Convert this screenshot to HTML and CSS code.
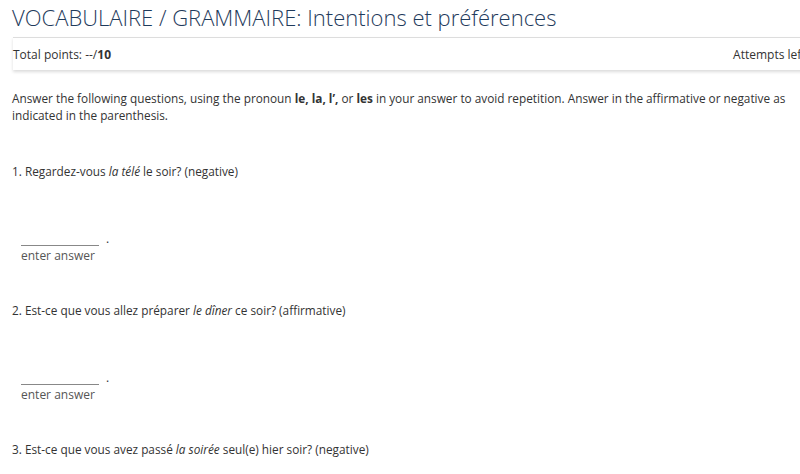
FILE: index.html
```html
<!DOCTYPE html>
<html>
<head>
<meta charset="utf-8">
<link rel="stylesheet" href="styles.css">
</head>
<body>
<div class="page">
  <h1 class="title">VOCABULAIRE / GRAMMAIRE: Intentions et préférences</h1>
  <div class="bar">
    <span class="points">Total points: --/<b>10</b></span>
    <span class="attempts">Attempts left: 2/2</span>
  </div>
  <div class="content">
    <p class="intro">Answer the following questions, using the pronoun <b>le, la, l’,</b> or <b>les</b> in your answer to avoid repetition. Answer in the affirmative or negative as indicated in the parenthesis.</p>

    <div class="question">
      <p class="prompt">1. Regardez-vous <i>la télé</i> le soir? (negative)</p>
      <div class="answer">
        <div class="field">
          <span class="blank"></span>
          <span class="label">enter answer</span>
        </div>
        <span class="dot">.</span>
      </div>
    </div>

    <div class="question">
      <p class="prompt">2. Est-ce que vous allez préparer <i>le dîner</i> ce soir? (affirmative)</p>
      <div class="answer">
        <div class="field">
          <span class="blank"></span>
          <span class="label">enter answer</span>
        </div>
        <span class="dot">.</span>
      </div>
    </div>

    <div class="question">
      <p class="prompt">3. Est-ce que vous avez passé <i>la soirée</i> seul(e) hier soir? (negative)</p>
    </div>
  </div>
</div>
</body>
</html>
```
FILE: styles.css
```css
html, body {
  margin: 0;
  padding: 0;
  background: #fff;
  overflow: hidden;
}
body {
  font-family: "Open Sans", "DejaVu Sans", sans-serif;
  color: #333;
}
.page {
  width: 800px;
  overflow: hidden;
}
.title {
  margin: 0;
  padding: 2px 0 0 12px;
  height: 35px;
  font-size: 22px;
  line-height: 30px;
  font-weight: 300;
  color: #1f3b5c;
  white-space: nowrap;
}
.bar {
  margin-left: 13px;
  width: 817px;
  height: 32px;
  border-top: 1px solid #ddd;
  box-shadow: 0 2px 3px rgba(0, 0, 0, 0.14);
  display: flex;
  align-items: center;
  justify-content: space-between;
  font-size: 12px;
  color: #333;
  white-space: nowrap;
}
.bar b { font-weight: 700; }
.content {
  padding: 20px 4px 0 12px;
  font-size: 11.8px;
  line-height: 17px;
}
.intro {
  margin: 0;
}
.intro b { font-weight: 700; }
.prompt {
  margin: 39px 0 0 0;
}
.answer {
  display: flex;
  align-items: flex-start;
  margin: 53px 0 0 9px;
}
.field {
  display: flex;
  flex-direction: column;
}
.blank {
  display: block;
  width: 78px;
  height: 12px;
  border-bottom: 1px solid #888;
}
.label {
  margin-top: 2px;
  color: #555;
  font-size: 12px;
  line-height: 16px;
}
.dot {
  margin-left: 7px;
  line-height: 12px;
  font-size: 12px;
}
.question + .question .prompt {
  margin-top: 38px;
}
```
